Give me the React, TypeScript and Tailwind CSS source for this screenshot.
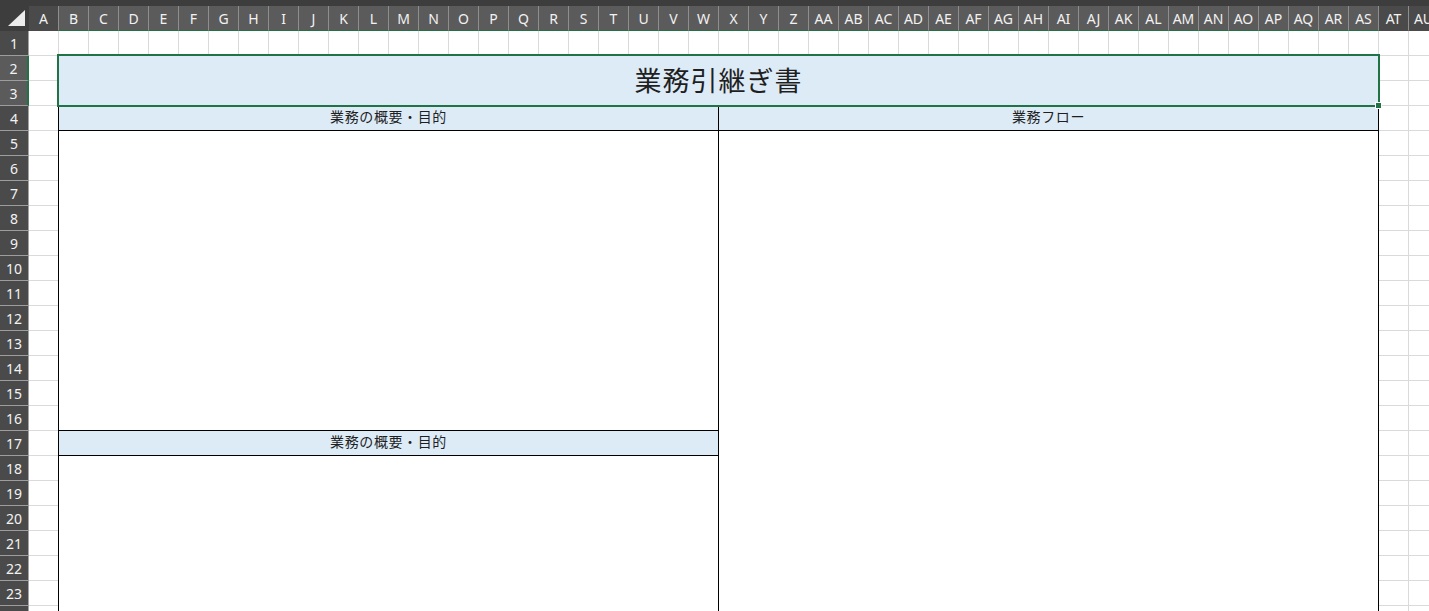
import clsx from 'clsx';

const COL_COUNT = 47;
const ROW_COUNT = 24;

const colName = (i: number) =>
  i < 26 ? String.fromCharCode(65 + i) : 'A' + String.fromCharCode(65 + i - 26);

// B..AS are selected (title cell B2:AS3)
const isSelCol = (i: number) => i >= 1 && i <= 44;
const isSelRow = (r: number) => r === 2 || r === 3;

// cells that belong to a merged block (B..AS from row 2 down)
const isMerged = (r: number, c: number) => r >= 2 && c >= 1 && c <= 44;

function ColHeader({ index }: { index: number }) {
  const sel = isSelCol(index);
  return (
    <div className="flex flex-col bg-[#3d3d3d] pt-[6px]">
      <div
        className={clsx(
          'flex flex-1 items-center justify-center border-r border-b border-r-[#8e8e8e] text-[14px] text-[#f2f2f2]',
          sel ? 'bg-[#5b5b5b] border-b-[#217346]' : 'bg-[#4a4a4a] border-b-[#4a4a4a]'
        )}
      >
        {colName(index)}
      </div>
    </div>
  );
}

function RowHeader({ row }: { row: number }) {
  const sel = isSelRow(row);
  return (
    <div
      className={clsx(
        'flex items-center justify-center border-b border-b-[#9d9d9d] text-[14px] text-[#f2f2f2]',
        sel ? 'bg-[#5b5b5b] border-r-2 border-r-[#217346]' : 'bg-[#4a4a4a] border-r border-r-[#a3a3a3]'
      )}
    >
      {row}
    </div>
  );
}

function Cell() {
  return <div className="border-r border-b border-[#dadada] bg-white" />;
}

export default function App() {
  const rows = Array.from({ length: ROW_COUNT }, (_, i) => i + 1);
  const cols = Array.from({ length: COL_COUNT }, (_, i) => i);

  return (
    <div className="w-[1429px] h-[611px] overflow-hidden bg-white font-['Noto_Sans','Noto_Sans_CJK_JP',sans-serif]">
      <div className="grid grid-cols-[29px_repeat(47,30px)] grid-rows-[31px_repeat(24,25px)]">
        {/* Corner */}
        <div className="relative bg-[#3d3d3d]">
          <svg className="absolute inset-0" width="29" height="31" viewBox="0 0 29 31">
            <polygon points="8,26 25,26 25,10" fill="#ececec" />
          </svg>
        </div>

        {/* Column headers */}
        {cols.map((c) => (
          <ColHeader key={c} index={c} />
        ))}

        {/* Rows: header + plain cells (merged areas placed below) */}
        {rows.map((r) => (
          <div key={r} className="contents">
            <RowHeader row={r} />
            {cols.filter((c) => !isMerged(r, c)).map((c) => (
              <Cell key={c} />
            ))}
          </div>
        ))}

        {/* Title B2:AS3 */}
        <div className="relative col-start-3 col-span-44 row-start-3 row-span-2 -ml-px -mt-px flex items-center justify-center border border-black bg-[#ddebf7] pb-[3px]">
          <span className="font-['Noto_Sans_CJK_JP',sans-serif] text-[27px] leading-none tracking-[1px] text-[#1f1f1f]">
            業務引継ぎ書
          </span>
          {/* selection outline */}
          <div className="absolute -inset-[2px] border-2 border-[#217346]">
            <div className="absolute -right-[4px] -bottom-[4px] h-[7px] w-[7px] border border-white bg-[#217346]" />
          </div>
        </div>

        {/* Row 4 headers */}
        <div className="col-start-3 col-span-22 row-start-5 -ml-px flex items-center justify-center border-l border-r border-b border-black bg-[#ddebf7] pb-[4px] font-['Noto_Sans_CJK_JP',sans-serif] text-[14px] leading-none tracking-[0.6px] text-[#1f1f1f]">
          業務の概要・目的
        </div>
        <div className="col-start-25 col-span-22 row-start-5 flex items-center justify-center border-r border-b border-black bg-[#ddebf7] pb-[4px] font-['Noto_Sans_CJK_JP',sans-serif] text-[14px] leading-none tracking-[0.6px] text-[#1f1f1f]">
          業務フロー
        </div>

        {/* Left box rows 5-16 */}
        <div className="col-start-3 col-span-22 row-start-6 row-span-12 -ml-px border-l border-r border-b border-black bg-white" />

        {/* Right box rows 5-24 */}
        <div className="col-start-25 col-span-22 row-start-6 row-span-20 border-r border-black bg-white" />

        {/* Row 17 header */}
        <div className="col-start-3 col-span-22 row-start-18 -ml-px flex items-center justify-center border-l border-r border-b border-black bg-[#ddebf7] pb-[4px] font-['Noto_Sans_CJK_JP',sans-serif] text-[14px] leading-none tracking-[0.6px] text-[#1f1f1f]">
          業務の概要・目的
        </div>

        {/* Left box rows 18-24 */}
        <div className="col-start-3 col-span-22 row-start-19 row-span-7 -ml-px border-l border-r border-black bg-white" />
      </div>
    </div>
  );
}
